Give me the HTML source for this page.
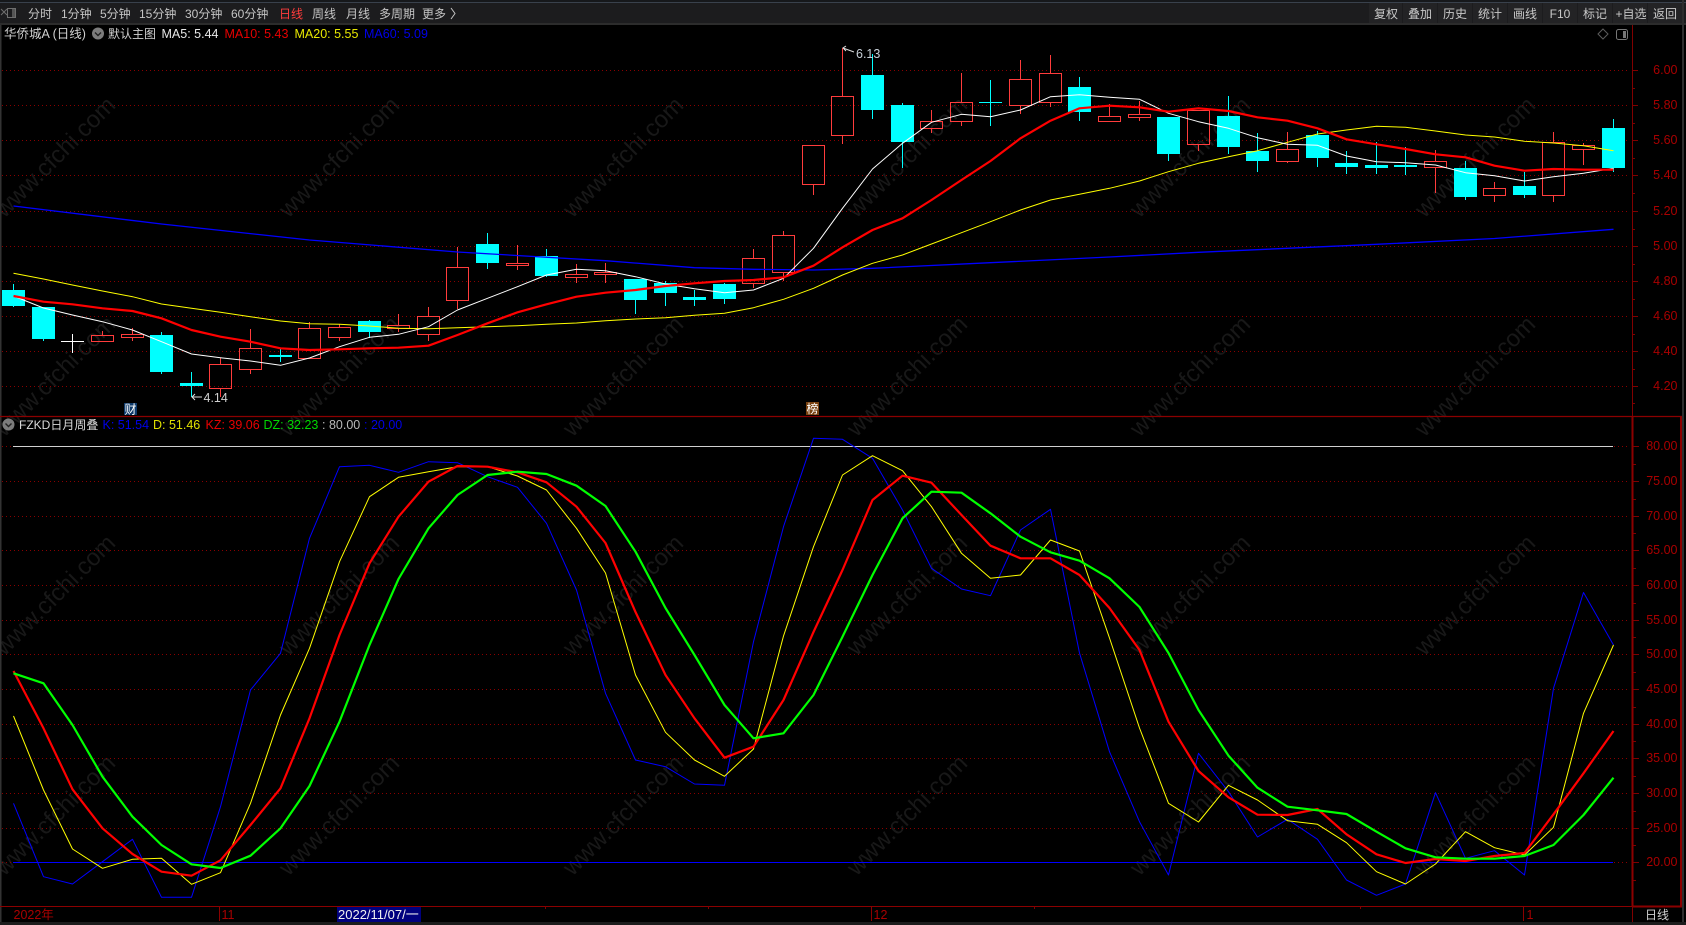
<!DOCTYPE html>
<html><head><meta charset="utf-8"><title>华侨城A</title>
<style>
html,body{margin:0;padding:0;background:#000;width:1686px;height:925px;overflow:hidden}
svg{display:block}
text{font-family:"Liberation Sans","Noto Sans CJK SC",sans-serif;font-size:12.5px;white-space:pre}
.tb{fill:#c4c4c4;font-size:12px}
.bt{fill:#c8c8c8;font-size:12px;text-anchor:middle}
.ax{fill:#a80000;text-anchor:end}
.wm{fill:#181818;font-size:24px;text-anchor:middle}
.g{stroke:#8a0000;stroke-width:1;stroke-dasharray:1 3;fill:none}
.th{fill:none;stroke-width:1;stroke-linejoin:round}
.tk{fill:none;stroke-width:2.2;stroke-linejoin:round}
</style></head>
<body>
<svg width="1686" height="925" viewBox="0 0 1686 925" xmlns="http://www.w3.org/2000/svg">
<rect width="1686" height="925" fill="#000"/>

<!-- watermarks -->
<g>
<text class="wm" transform="rotate(-45 55 157)" x="55" y="165">www.cfchi.com</text>
<text class="wm" transform="rotate(-45 339 157)" x="339" y="165">www.cfchi.com</text>
<text class="wm" transform="rotate(-45 623 157)" x="623" y="165">www.cfchi.com</text>
<text class="wm" transform="rotate(-45 907 157)" x="907" y="165">www.cfchi.com</text>
<text class="wm" transform="rotate(-45 1190 157)" x="1190" y="165">www.cfchi.com</text>
<text class="wm" transform="rotate(-45 1475 157)" x="1475" y="165">www.cfchi.com</text>
<text class="wm" transform="rotate(-45 55 376)" x="55" y="384">www.cfchi.com</text>
<text class="wm" transform="rotate(-45 339 376)" x="339" y="384">www.cfchi.com</text>
<text class="wm" transform="rotate(-45 623 376)" x="623" y="384">www.cfchi.com</text>
<text class="wm" transform="rotate(-45 907 376)" x="907" y="384">www.cfchi.com</text>
<text class="wm" transform="rotate(-45 1190 376)" x="1190" y="384">www.cfchi.com</text>
<text class="wm" transform="rotate(-45 1475 376)" x="1475" y="384">www.cfchi.com</text>
<text class="wm" transform="rotate(-45 55 595)" x="55" y="603">www.cfchi.com</text>
<text class="wm" transform="rotate(-45 339 595)" x="339" y="603">www.cfchi.com</text>
<text class="wm" transform="rotate(-45 623 595)" x="623" y="603">www.cfchi.com</text>
<text class="wm" transform="rotate(-45 907 595)" x="907" y="603">www.cfchi.com</text>
<text class="wm" transform="rotate(-45 1190 595)" x="1190" y="603">www.cfchi.com</text>
<text class="wm" transform="rotate(-45 1475 595)" x="1475" y="603">www.cfchi.com</text>
<text class="wm" transform="rotate(-45 55 815)" x="55" y="823">www.cfchi.com</text>
<text class="wm" transform="rotate(-45 339 815)" x="339" y="823">www.cfchi.com</text>
<text class="wm" transform="rotate(-45 623 815)" x="623" y="823">www.cfchi.com</text>
<text class="wm" transform="rotate(-45 907 815)" x="907" y="823">www.cfchi.com</text>
<text class="wm" transform="rotate(-45 1190 815)" x="1190" y="823">www.cfchi.com</text>
<text class="wm" transform="rotate(-45 1475 815)" x="1475" y="823">www.cfchi.com</text>
</g>

<!-- toolbar -->
<rect x="0" y="0" width="1686" height="24" fill="#1c1c1e"/>
<rect x="0" y="0" width="1686" height="2" fill="#16181b"/>
<rect x="0" y="2" width="1686" height="1" fill="#39414c"/>
<rect x="0" y="23" width="1686" height="2" fill="#2c2c2c"/>
<g fill="#232325">
<rect x="1369" y="3" width="33" height="20"/><rect x="1403" y="3" width="34" height="20"/><rect x="1438" y="3" width="34" height="20"/><rect x="1473" y="3" width="34" height="20"/><rect x="1508" y="3" width="34" height="20"/><rect x="1543" y="3" width="34" height="20"/><rect x="1578" y="3" width="34" height="20"/><rect x="1613" y="3" width="34" height="20"/><rect x="1648" y="3" width="34" height="20"/>
</g>
<path d="M1 9l3 3-3 3M7 9l-3 3 3 3" fill="none" stroke="#6e6e6e" stroke-width="1"/>
<rect x="7.5" y="8.5" width="8" height="9" fill="none" stroke="#6e6e6e"/>
<rect x="12" y="9" width="3" height="8" fill="#555"/>
<text class="tb" x="28" y="18">分时</text>
<text class="tb" x="61" y="18">1分钟</text>
<text class="tb" x="100" y="18">5分钟</text>
<text class="tb" x="139" y="18">15分钟</text>
<text class="tb" x="185" y="18">30分钟</text>
<text class="tb" x="231" y="18">60分钟</text>
<text class="tb" x="279" y="18" style="fill:#ff3c3c">日线</text>
<text class="tb" x="312" y="18">周线</text>
<text class="tb" x="346" y="18">月线</text>
<text class="tb" x="379" y="18">多周期</text>
<text class="tb" x="422" y="18">更多</text>
<path d="M451 8l4 5.5-4 5.5" fill="none" stroke="#c4c4c4"/>
<text class="bt" x="1386" y="18">复权</text>
<text class="bt" x="1420" y="18">叠加</text>
<text class="bt" x="1455" y="18">历史</text>
<text class="bt" x="1490" y="18">统计</text>
<text class="bt" x="1525" y="18">画线</text>
<text class="bt" x="1560" y="18">F10</text>
<text class="bt" x="1595" y="18">标记</text>
<text class="bt" x="1631" y="18">+自选</text>
<text class="bt" x="1665" y="18">返回</text>

<!-- title row -->
<text x="4" y="38" style="fill:#d0d0d0">华侨城A (日线)</text>
<circle cx="98" cy="33.5" r="6" fill="#7c7c7c"/>
<path d="M95 32.5l3 3 3-3" fill="none" stroke="#222" stroke-width="1.4"/>
<text x="108" y="38" style="fill:#d0d0d0;font-size:12px">默认主图</text>
<text x="161.5" y="38" style="fill:#e8e8e8">MA5: 5.44</text>
<text x="224.5" y="38" style="fill:#e80000">MA10: 5.43</text>
<text x="294.5" y="38" style="fill:#e8e800">MA20: 5.55</text>
<text x="364" y="38" style="fill:#0000e8">MA60: 5.09</text>
<path d="M1603 29l5 5-5 5-5-5z" fill="none" stroke="#5c5c5c"/>
<rect x="1616.5" y="29.5" width="11" height="10" rx="2" fill="none" stroke="#777"/>
<rect x="1623" y="31" width="3" height="7" fill="#777"/>

<!-- grid -->
<path class="g" d="M2 70.5H1628M2 105.5H1628M2 140.5H1628M2 175.5H1628M2 211.5H1628M2 246.5H1628M2 281.5H1628M2 316.5H1628M2 351.5H1628M2 386.5H1628M2 446.5H1628M2 481.5H1628M2 516.5H1628M2 550.5H1628M2 585.5H1628M2 620.5H1628M2 654.5H1628M2 689.5H1628M2 724.5H1628M2 758.5H1628M2 793.5H1628M2 828.5H1628M2 862.5H1628"/>

<!-- frame -->
<rect x="0" y="25" width="1.5" height="897" fill="#333"/>
<rect x="1682" y="0" width="2" height="925" fill="#2e2e2e"/>
<path d="M0 416.5H1682" stroke="#8b0000" stroke-width="1.2"/>
<path d="M1632.5 25V416" stroke="#800000"/>
<path d="M1632.5 416V906" stroke="#8b0000" stroke-width="2"/>
<path d="M1681 416V906" stroke="#8b0000" stroke-width="2"/>
<path d="M1632 906.5H1682" stroke="#8b0000" stroke-width="2"/>
<path d="M0 906.5H1632" stroke="#8b0000"/>
<path d="M1632.5 906V922" stroke="#800000"/>
<path stroke="#800000" d="M1632 70.5h6M1632 88.5h3M1632 105.5h6M1632 123.5h3M1632 140.5h6M1632 158.5h3M1632 175.5h6M1632 193.5h3M1632 211.5h6M1632 229.5h3M1632 246.5h6M1632 264.5h3M1632 281.5h6M1632 299.5h3M1632 316.5h6M1632 334.5h3M1632 351.5h6M1632 369.5h3M1632 386.5h6M1632 403.5h3M1633 446.5h6M1633 464.5h3M1633 481.5h6M1633 499.5h3M1633 516.5h6M1633 533.5h3M1633 550.5h6M1633 568.5h3M1633 585.5h6M1633 603.5h3M1633 620.5h6M1633 637.5h3M1633 654.5h6M1633 672.5h3M1633 689.5h6M1633 707.5h3M1633 724.5h6M1633 741.5h3M1633 758.5h6M1633 776.5h3M1633 793.5h6M1633 811.5h3M1633 828.5h6M1633 845.5h3M1633 862.5h6M1633 880.5h3M545.5 906v3M708.5 906v3M1034.5 906v3M1360.5 906v3"/>

<!-- candles -->
<path fill="none" stroke="#ff3c3c" stroke-width="1" d="
M102.5 331V335.5M91.5 335.5H113.5V341.5H91.5Z
M132.5 328V334.5M132.5 337.5V341M121.5 334.5H143.5V337.5H121.5Z
M220.5 358V364.5M220.5 388.5V397M209.5 364.5H231.5V388.5H209.5Z
M250.5 329V348.5M250.5 369.5V374M239.5 348.5H261.5V369.5H239.5Z
M309.5 322V328.5M298.5 328.5H320.5V358.5H298.5Z
M339.5 324V327.5M339.5 337.5V341M328.5 327.5H350.5V337.5H328.5Z
M398.5 314V325.5M398.5 328.5V332M387.5 325.5H409.5V328.5H387.5Z
M428.5 307V316.5M428.5 334.5V341M417.5 316.5H439.5V334.5H417.5Z
M457.5 247V267.5M457.5 300.5V309M446.5 267.5H468.5V300.5H446.5Z
M517.5 245V263.5M517.5 265.5V270M506.5 263.5H528.5V265.5H506.5Z
M576.5 264V274.5M576.5 277.5V283M565.5 274.5H587.5V277.5H565.5Z
M605.5 263V272.5M605.5 274.5V283M594.5 272.5H616.5V274.5H594.5Z
M753.5 249V258.5M753.5 283.5V288M742.5 258.5H764.5V283.5H742.5Z
M783.5 231V235.5M783.5 272.5V281M772.5 235.5H794.5V272.5H772.5Z
M813.5 184.5V195M802.5 145.5H824.5V184.5H802.5Z
M842.5 48V96.5M842.5 135.5V144M831.5 96.5H853.5V135.5H831.5Z
M931.5 110V121.5M931.5 128.5V133M920.5 121.5H942.5V128.5H920.5Z
M961.5 73V102.5M961.5 121.5V126M950.5 102.5H972.5V121.5H950.5Z
M1020.5 60V79.5M1020.5 105.5V114M1009.5 79.5H1031.5V105.5H1009.5Z
M1050.5 55V73.5M1050.5 102.5V107M1039.5 73.5H1061.5V102.5H1039.5Z
M1109.5 104V116.5M1098.5 116.5H1120.5V121.5H1098.5Z
M1139.5 101V114.5M1139.5 117.5V121M1128.5 114.5H1150.5V117.5H1128.5Z
M1198.5 144.5V151M1187.5 110.5H1209.5V144.5H1187.5Z
M1287.5 132V149.5M1287.5 161.5V163M1276.5 149.5H1298.5V161.5H1276.5Z
M1435.5 150V161.5M1435.5 167.5V193M1424.5 161.5H1446.5V167.5H1424.5Z
M1494.5 182V188.5M1494.5 195.5V202M1483.5 188.5H1505.5V195.5H1483.5Z
M1553.5 132V142.5M1553.5 195.5V202M1542.5 142.5H1564.5V195.5H1542.5Z
M1583.5 143V145.5M1583.5 149.5V165M1572.5 145.5H1594.5V149.5H1572.5Z"/>
<path fill="none" stroke="#00ffff" stroke-width="1" d="M13.5 284V307M43.5 339V341M161.5 332V374M191.5 372V397M280.5 349V362M369.5 320V338M487.5 233V269M546.5 249V277M635.5 300V314M665.5 281V306M694.5 290V306M724.5 283V304M872.5 54V119M902.5 103V168M990.5 80V126M1079.5 77V121M1168.5 154V161M1228.5 96V154M1257.5 133V172M1317.5 131V167M1346.5 151V174M1376.5 142V174M1405.5 147V175M1465.5 161V200M1524.5 172V198M1613.5 119V172"/>
<path fill="#00ffff" d="M2 290h23v16H2zM32 307h23v32H32zM150 335h23v37h-23zM180 383h23v3h-23zM269 355h23v2h-23zM358 321h23v11h-23zM476 244h23v19h-23zM535 256h23v20h-23zM624 279h23v21h-23zM654 283h23v10h-23zM683 297h23v3h-23zM713 284h23v15h-23zM861 75h23v35h-23zM891 105h23v37h-23zM979 102h23v1h-23zM1068 87h23v25h-23zM1157 117h23v37h-23zM1217 116h23v31h-23zM1246 151h23v10h-23zM1306 135h23v23h-23zM1335 163h23v4h-23zM1365 165h23v3h-23zM1394 165h23v2h-23zM1454 168h23v29h-23zM1513 186h23v9h-23zM1602 128h23v40h-23z"/>
<path fill="none" stroke="#fff" d="M61 341.5H84M72.5 334V353"/>

<!-- MA lines -->
<polyline class="th" stroke="#0000ff" style="stroke-width:1.3" points="13.5,206 161.5,224 309.5,240 457.5,252 605.5,260.7 694.5,267.7 753.5,269.3 813.5,270 872.5,268.3 990.5,262.7 1109.5,257 1198.5,252.3 1376.5,244.3 1494.5,238.5 1613.5,229.3"/>
<polyline class="th" stroke="#ffff00" points="13.5,273.3 43.5,279 72.5,285 102.5,291 132.5,296.7 161.5,304 191.5,308.3 220.5,312.3 250.5,316.7 280.5,321 309.5,323.7 339.5,324.3 369.5,326 398.5,328.3 428.5,328.7 457.5,327.7 487.5,326.7 517.5,325.7 546.5,324.3 576.5,323 605.5,320.7 635.5,319 665.5,317.7 694.5,315.3 724.5,313.3 753.5,307.7 783.5,299.3 813.5,288.3 842.5,275 872.5,263.3 902.5,255 931.5,244 961.5,232.7 990.5,221.7 1020.5,210 1050.5,200 1079.5,194.3 1109.5,188.3 1139.5,181 1168.5,171.7 1198.5,163.3 1228.5,156.7 1257.5,150.7 1287.5,142.3 1317.5,134 1346.5,130 1376.5,126.3 1405.5,127.3 1435.5,131 1465.5,135 1494.5,137 1524.5,141.3 1553.5,143 1583.5,145.7 1613.5,150.7"/>
<polyline class="th" stroke="#ffffff" points="13.5,296 43.5,308 72.5,315 102.5,321.7 132.5,330 161.5,341.7 191.5,354 220.5,357.7 250.5,361 280.5,365.3 309.5,358 339.5,346.7 369.5,337.3 398.5,334.3 428.5,326.7 457.5,310 487.5,298.3 517.5,286.7 546.5,275 576.5,269.3 605.5,270.7 635.5,276.7 665.5,284 694.5,288.7 724.5,292.7 753.5,290 783.5,278.3 813.5,248.3 842.5,208.3 872.5,169 902.5,143.3 931.5,122.3 961.5,114.3 990.5,116.7 1020.5,110 1050.5,96.7 1079.5,94.7 1109.5,97.3 1139.5,99.3 1168.5,113.3 1198.5,121.7 1228.5,128.3 1257.5,137.7 1287.5,144.3 1317.5,145.3 1346.5,156 1376.5,161.7 1405.5,162.7 1435.5,165 1465.5,172.7 1494.5,175.7 1524.5,181 1553.5,176.7 1583.5,173.3 1613.5,168.3"/>
<polyline class="tk" stroke="#ff0000" points="13.5,296 43.5,301.7 72.5,304.3 102.5,308.3 132.5,311 161.5,318.3 191.5,330 220.5,336.7 250.5,341.7 280.5,348.3 309.5,350 339.5,349.3 369.5,348.3 398.5,347.7 428.5,345.7 457.5,335 487.5,323.3 517.5,312.3 546.5,304.3 576.5,296.7 605.5,292.7 635.5,290 665.5,286 694.5,283.3 724.5,281 753.5,280 783.5,277.3 813.5,265.7 842.5,247.3 872.5,230 902.5,218.3 931.5,200 961.5,180 990.5,161 1020.5,138.3 1050.5,120.7 1079.5,108.3 1109.5,105.7 1139.5,107.3 1168.5,111.7 1198.5,108.3 1228.5,111 1257.5,117.3 1287.5,120.7 1317.5,128.3 1346.5,139.3 1376.5,144.3 1405.5,149 1435.5,154.3 1465.5,157.3 1494.5,165.7 1524.5,170.7 1553.5,169 1583.5,169.7 1613.5,169.7"/>

<!-- high / low labels -->
<path d="M854 52L843 48M846 46l-3 2 3 3" fill="none" stroke="#ddd"/>
<text x="856" y="58" style="fill:#c8d0d8">6.13</text>
<path d="M202 397H192M195 394l-3 3 3 3" fill="none" stroke="#ddd"/>
<text x="203.5" y="402" style="fill:#d0d0d0">4.14</text>

<!-- markers -->
<rect x="124" y="403" width="13" height="12" fill="#0e3a6a"/>
<text x="124.5" y="413.5" style="fill:#fff;font-size:12px">财</text>
<rect x="806" y="402" width="13" height="13" fill="#7a4210"/>
<text x="806.5" y="413" style="fill:#fff;font-size:12px">榜</text>

<!-- indicator header -->
<circle cx="8.5" cy="424.5" r="6" fill="#7c7c7c"/>
<path d="M5.5 423.5l3 3 3-3" fill="none" stroke="#222" stroke-width="1.4"/>
<text x="19" y="429" style="fill:#d8d8d8;font-size:12px">FZKD日月周叠</text>
<text x="102.5" y="429" style="fill:#0000e8">K: 51.54</text>
<text x="153" y="429" style="fill:#e0e000">D: 51.46</text>
<text x="205.5" y="429" style="fill:#e80000">KZ: 39.06</text>
<text x="263.5" y="429" style="fill:#00d800">DZ: 32.23</text>
<text x="322" y="429" style="fill:#b8b8b8">: 80.00</text>
<text x="364" y="429" style="fill:#0000e8">: 20.00</text>

<!-- reference lines -->
<path d="M13 446.5H1613" stroke="#d0d0d0" stroke-width="1"/>
<path d="M13 862.5H1613" stroke="#0000ff" stroke-width="1"/>

<!-- indicator lines -->
<polyline class="th" stroke="#0000ff" points="13.5,803.3 43.5,876.7 72.5,884 102.5,861.7 132.5,839.3 161.5,897.3 191.5,897.3 220.5,806.7 250.5,690 280.5,653.3 309.5,538.3 339.5,466.7 369.5,465.3 398.5,472.3 428.5,461.7 457.5,462.7 487.5,476.7 517.5,487.3 546.5,523.3 576.5,590 605.5,693.3 635.5,760 665.5,766.7 694.5,784 724.5,785.3 753.5,641.7 783.5,526.7 813.5,438.3 842.5,439.3 872.5,458.3 902.5,510 931.5,568.3 961.5,589 990.5,595.7 1020.5,530 1050.5,509.3 1079.5,653 1109.5,751.7 1139.5,821.7 1168.5,875 1198.5,753.3 1228.5,791.7 1257.5,837 1287.5,819.3 1317.5,839.3 1346.5,880 1376.5,895.3 1405.5,884 1435.5,792.7 1465.5,858.3 1494.5,850.7 1524.5,875 1553.5,688.3 1583.5,592.5 1613.5,645"/>
<polyline class="th" stroke="#ffff00" points="13.5,716 43.5,790 72.5,849 102.5,868.3 132.5,859.3 161.5,858.3 191.5,884.3 220.5,872.7 250.5,803.3 280.5,715 309.5,648.3 339.5,561.7 369.5,496.7 398.5,477.3 428.5,471.7 457.5,466.7 487.5,466.7 517.5,476 546.5,490 576.5,528.3 605.5,573 635.5,675 665.5,732.3 694.5,760 724.5,776.3 753.5,749 783.5,636 813.5,546.7 842.5,475 872.5,455.7 902.5,470.7 931.5,506.7 961.5,553.3 990.5,578.3 1020.5,575 1050.5,540 1079.5,551 1109.5,638 1139.5,728 1168.5,803.3 1198.5,822 1228.5,785.3 1257.5,800 1287.5,820.7 1317.5,824.3 1346.5,842.7 1376.5,871.7 1405.5,884 1435.5,864 1465.5,831.7 1494.5,847.7 1524.5,855 1553.5,827.3 1583.5,713.3 1613.5,645"/>
<polyline class="tk" stroke="#ff0000" points="13.5,671 43.5,728.3 72.5,789.3 102.5,828.3 132.5,854 161.5,871.7 191.5,875.7 220.5,860.3 250.5,825 280.5,788.3 309.5,718.3 339.5,635 369.5,563.3 398.5,516.7 428.5,481.7 457.5,466 487.5,466.7 517.5,472.3 546.5,482.3 576.5,506.7 605.5,543 635.5,612 665.5,675 694.5,718.3 724.5,757.7 753.5,746.7 783.5,700 813.5,632 842.5,570 872.5,500 902.5,475.7 931.5,482.7 961.5,515 990.5,545.7 1020.5,558.3 1050.5,558.3 1079.5,575 1109.5,608 1139.5,650 1168.5,721.7 1198.5,771 1228.5,797.3 1257.5,814.7 1287.5,815 1317.5,809 1346.5,834.3 1376.5,854.3 1405.5,863 1435.5,859 1465.5,861 1494.5,856 1524.5,853 1553.5,814.3 1583.5,773.3 1613.5,731"/>
<polyline class="tk" stroke="#00ff00" points="13.5,673.3 43.5,683.3 72.5,725 102.5,776.7 132.5,816.7 161.5,845 191.5,864.3 220.5,868 250.5,855.7 280.5,828.3 309.5,786 339.5,721.7 369.5,645 398.5,579 428.5,528.3 457.5,495 487.5,475 517.5,471.7 546.5,474 576.5,485.7 605.5,506 635.5,551.7 665.5,608 694.5,655 724.5,705 753.5,738.3 783.5,733.3 813.5,695 842.5,636.7 872.5,575 902.5,518.3 931.5,491.7 961.5,492.7 990.5,513.3 1020.5,536.7 1050.5,552.3 1079.5,560.7 1109.5,578.3 1139.5,607 1168.5,653 1198.5,710 1228.5,755.7 1257.5,787.7 1287.5,806.7 1317.5,810.3 1346.5,814 1376.5,831.7 1405.5,848.3 1435.5,857.3 1465.5,858.7 1494.5,858.7 1524.5,856 1553.5,845 1583.5,815 1613.5,777.7"/>

<!-- axis labels -->
<text class="ax" x="1677.5" y="74">6.00</text>
<text class="ax" x="1677.5" y="109">5.80</text>
<text class="ax" x="1677.5" y="144">5.60</text>
<text class="ax" x="1677.5" y="179">5.40</text>
<text class="ax" x="1677.5" y="215">5.20</text>
<text class="ax" x="1677.5" y="250">5.00</text>
<text class="ax" x="1677.5" y="285">4.80</text>
<text class="ax" x="1677.5" y="320">4.60</text>
<text class="ax" x="1677.5" y="355">4.40</text>
<text class="ax" x="1677.5" y="390">4.20</text>
<text class="ax" x="1677.5" y="450">80.00</text>
<text class="ax" x="1677.5" y="485">75.00</text>
<text class="ax" x="1677.5" y="520">70.00</text>
<text class="ax" x="1677.5" y="554">65.00</text>
<text class="ax" x="1677.5" y="589">60.00</text>
<text class="ax" x="1677.5" y="624">55.00</text>
<text class="ax" x="1677.5" y="658">50.00</text>
<text class="ax" x="1677.5" y="693">45.00</text>
<text class="ax" x="1677.5" y="728">40.00</text>
<text class="ax" x="1677.5" y="762">35.00</text>
<text class="ax" x="1677.5" y="797">30.00</text>
<text class="ax" x="1677.5" y="832">25.00</text>
<text class="ax" x="1677.5" y="866">20.00</text>

<!-- bottom axis -->
<text x="13.5" y="919" style="fill:#a80000">2022年</text>
<path d="M219.5 906V921M871.5 906V921M1523.5 906V921" stroke="#8b0000"/>
<text x="221.5" y="919" style="fill:#a80000">11</text>
<text x="873.5" y="919" style="fill:#a80000">12</text>
<text x="1526.5" y="919" style="fill:#a80000">1</text>
<rect x="337" y="907" width="84" height="15" fill="#00007e"/>
<text x="338" y="919" style="fill:#f0f0f0;font-size:13px">2022/11/07/一</text>
<text x="1645" y="919" style="fill:#d0d0d0;font-size:12px">日线</text>
<rect x="0" y="922" width="1686" height="3" fill="#1d1d1d"/>
</svg>
</body></html>
